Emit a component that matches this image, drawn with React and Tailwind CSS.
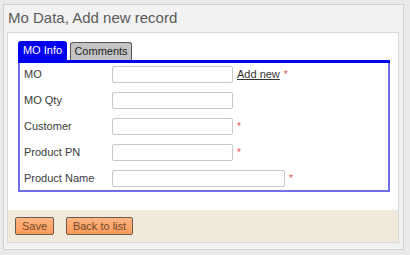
export default function App() {
  const rows = [
    { label: "MO", w: "w-[121px]", extra: "add", star: true },
    { label: "MO Qty", w: "w-[121px]", star: false },
    { label: "Customer", w: "w-[121px]", star: true },
    { label: "Product PN", w: "w-[121px]", star: true },
    { label: "Product Name", w: "w-[173px]", star: true },
  ];
  return (
    <div className="w-[410px] h-[255px] bg-[#e9e9e9] pt-[4px] pl-[3px] pr-[6px] pb-[5px] font-['Liberation_Sans',sans-serif]">
      <div className="h-[246px] border border-[#d0d0d0] bg-[#f2f2f2] flex flex-col">
        <div className="h-[27px] pl-[4px] pt-[3px] text-[15px] text-[#5a5a5a] leading-[20px]">Mo Data, Add new record</div>
        <div className="ml-[3px] mr-[4px] h-[211px] border border-[#d8d8d8] bg-white flex flex-col">
          <div className="flex-1 pt-[8px] pl-[10px] pr-[8px]">
            <div className="flex gap-[3px] h-[19px] items-end">
              <div className="h-[19px] w-[49px] bg-[#0000ee] rounded-t-[3px] text-white text-[11px] flex items-center justify-center">MO Info</div>
              <div className="h-[18px] w-[62px] bg-[#c4c4c4] border border-[#555555] border-b-0 rounded-t-[3px] text-[#222222] text-[11px] flex items-center justify-center">Comments</div>
            </div>
            <div className="h-[3px] bg-[#0000ee]"></div>
            <div className="h-[129px] border-2 border-t-0 border-[#7070e8] pt-[3px] pl-[4px] flex flex-col gap-[9px]">
              {rows.map((r) => (
                <div key={r.label} className="flex items-center h-[17px] text-[11px] text-[#3a3a3a]">
                  <div className="w-[88px]">{r.label}</div>
                  <div className={`${r.w} h-[17px] border border-[#c8c8c8] rounded-[2px] bg-white`}></div>
                  {r.extra === "add" && <span className="ml-[4px] underline text-[#333333]">Add new</span>}
                  {r.star && <span className="ml-[4px] text-[#e05050] text-[10px]">*</span>}
                </div>
              ))}
            </div>
          </div>
          <div className="h-[32px] bg-[#f2e9dd] flex items-center gap-[12px] pl-[7px]">
            <button className="h-[18px] w-[39px] border border-[#6a5a4a] rounded-[2px] bg-gradient-to-b from-[#ffb482] to-[#ff9a5a] text-[11px] text-[#6b4a2a]">Save</button>
            <button className="h-[18px] w-[67px] border border-[#6a5a4a] rounded-[2px] bg-gradient-to-b from-[#ffb482] to-[#ff9a5a] text-[11px] text-[#6b4a2a]">Back to list</button>
          </div>
        </div>
      </div>
    </div>
  );
}
